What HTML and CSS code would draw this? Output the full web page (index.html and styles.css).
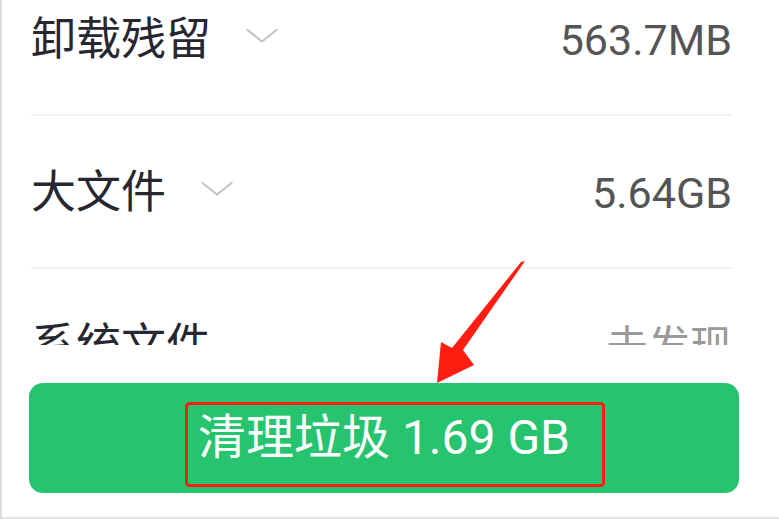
FILE: index.html
```html
<!DOCTYPE html>
<html lang="zh-CN">
<head>
<meta charset="utf-8">
<title>清理垃圾</title>
<link rel="stylesheet" href="styles.css">
</head>
<body>
<div class="screen">
  <div class="list">
    <div class="row">
      <div class="label">
        <span>卸载残留</span>
        <svg class="chev" width="32" height="16" viewBox="0 0 32 16"><polyline points="1.5,2 16,13.5 30.5,2" fill="none" stroke="#c4c4c4" stroke-width="2.2" stroke-linecap="round" stroke-linejoin="round"/></svg>
      </div>
      <span class="size">563.7MB</span>
    </div>
    <div class="row">
      <div class="label">
        <span>大文件</span>
        <svg class="chev" width="32" height="16" viewBox="0 0 32 16"><polyline points="1.5,2 16,13.5 30.5,2" fill="none" stroke="#c4c4c4" stroke-width="2.2" stroke-linecap="round" stroke-linejoin="round"/></svg>
      </div>
      <span class="size">5.64GB</span>
    </div>
    <div class="row">
      <div class="label">
        <span>系统文件</span>
      </div>
      <span class="size muted">未发现</span>
    </div>
  </div>
  <div class="footer">
    <button class="clean">清理垃圾 1.69 GB</button>
  </div>
</div>
<svg class="annot" width="779" height="519" viewBox="0 0 779 519">
  <polygon points="525,261 463,350 474,365 437,383 441,342 452,348 521,262" fill="#ff1d12"/>
  <rect x="186.5" y="403.5" width="417" height="82" rx="3" ry="3" fill="none" stroke="#ff1d12" stroke-width="3"/>
</svg>
</body>
</html>
```
FILE: styles.css
```css
html, body {
  margin: 0;
  padding: 0;
  background: #fff;
}
body {
  position: relative;
  width: 779px;
  height: 519px;
  overflow: hidden;
}
.screen {
  width: 777px;
  height: 517px;
  border-left: 2px solid #dcdcdc;
  border-bottom: 2px solid #e2e2e2;
  background: #fff;
  font-family: Roboto, "Noto Sans CJK SC", sans-serif;
}
.list {
  height: 345px;
  overflow: hidden;
  box-sizing: border-box;
  padding: 14px 47px 0 29px;
}
.row {
  display: flex;
  justify-content: space-between;
  align-items: baseline;
  height: 44px;
  padding-bottom: 56px;
  border-bottom: 2px solid #f4f4f4;
}
.row + .row {
  padding-top: 51px;
}
.label {
  display: flex;
  align-items: center;
  font-family: "Noto Sans CJK SC", sans-serif;
  font-size: 45px;
  line-height: 44px;
  color: #272731;
}
.chev {
  margin-left: 35px;
  display: block;
}
.size {
  font-size: 43px;
  line-height: 44px;
  color: #555555;
}
.size.muted {
  font-family: "Noto Sans CJK SC", sans-serif;
  font-size: 42px;
  color: #9a9a9a;
}
.footer {
  padding: 38px 40px 0 27px;
}
.clean {
  display: block;
  width: 100%;
  height: 110px;
  border: none;
  border-radius: 14px;
  background: #26c46e;
  color: #fff;
  font-family: Roboto, "Noto Sans CJK SC", sans-serif;
  font-size: 48px;
  line-height: 110px;
  padding: 0;
  text-align: center;
}
.annot {
  position: absolute;
  left: 0;
  top: 0;
  pointer-events: none;
}
```
